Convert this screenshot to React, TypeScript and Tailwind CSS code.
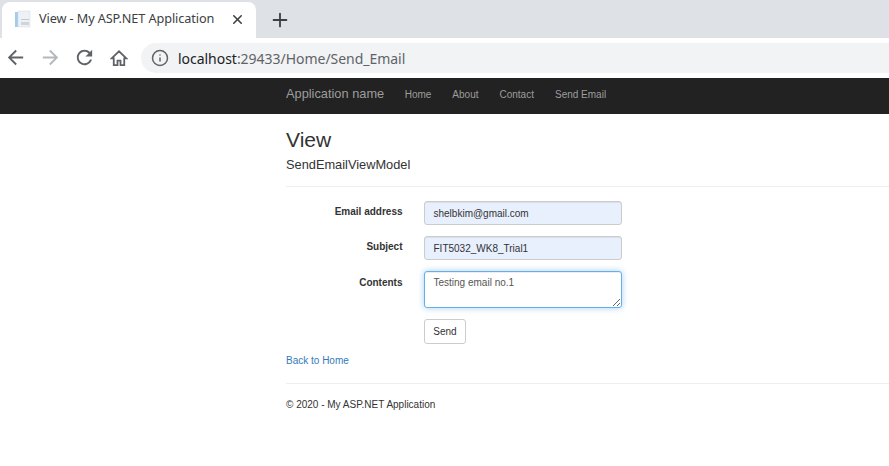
import { Info, Plus, X } from "lucide-react";

const navLinks = ["Home", "About", "Contact", "Send Email"];

function TabIcon() {
  return (
    <svg width="16" height="18" viewBox="0 0 16 18" className="shrink-0">
      <rect x="0" y="2" width="5" height="15" fill="#a5cbea" />
      <rect x="3" y="1" width="12" height="16" fill="#edf0f4" stroke="#d5dbe2" strokeWidth="0.5" />
      <rect x="6" y="9" width="8" height="1" fill="#c3cbd4" />
      <rect x="6" y="12" width="8" height="3" fill="#ced5dd" />
    </svg>
  );
}

function ToolIcon({ d, className }: { d: string; className: string }) {
  return (
    <svg width="23" height="23" viewBox="0 0 24 24" fill="currentColor" className={className}>
      <path d={d} />
    </svg>
  );
}

function Field({ label, value }: { label: string; value: string }) {
  return (
    <div className="flex items-center h-[24px] mb-[11px]">
      <label className="w-[116.5px] text-right text-[10px] font-bold text-[#333] mt-[-3px]">{label}</label>
      <div className="ml-[21.5px] w-[198px] h-[24px] flex items-center pl-[8.5px] text-[10px] text-[#333] bg-[#e8f0fe] border border-[#ccc] rounded-[3px] shadow-[inset_0_1px_1px_rgba(0,0,0,0.075)]">
        {value}
      </div>
    </div>
  );
}

export default function App() {
  return (
    <div className="w-[889px] h-[466px] overflow-hidden bg-white font-['Liberation_Sans',Arial,sans-serif]">
      {/* 브라우저 탭 */}
      <div className="h-[38px] bg-[#dee1e6] flex items-end pl-[2px]">
        <div className="w-[254px] h-[36px] bg-white rounded-t-[8px] flex items-center pl-[13px] pr-[11px] pb-[2px]">
          <TabIcon />
          <span className="ml-[8px] text-[12.7px] text-[#3c4043] font-['Noto_Sans','Open_Sans',sans-serif] tracking-[-0.1px] whitespace-nowrap">
            View - My ASP.NET Application
          </span>
          <X size={15} strokeWidth={2.5} className="ml-auto text-[#3c4043]" />
        </div>
        <Plus size={22} strokeWidth={2} className="ml-[12.5px] mb-[7px] text-[#3c4043]" />
      </div>

      {/* 주소창 */}
      <div className="h-[39px] bg-white flex items-center pl-[4px]">
        <ToolIcon
          className="text-[#5f6368]"
          d="M20 11H7.83l5.59-5.59L12 4l-8 8 8 8 1.41-1.41L7.83 13H20v-2z"
        />
        <ToolIcon
          className="ml-[11.5px] text-[#b4b7bb]"
          d="M4 11h12.17l-5.59-5.59L12 4l8 8-8 8-1.41-1.41L16.17 13H4v-2z"
        />
        <ToolIcon
          className="ml-[11.5px] text-[#5f6368]"
          d="M17.65 6.35C16.2 4.9 14.21 4 12 4c-4.42 0-7.99 3.58-7.99 8s3.57 8 7.99 8c3.73 0 6.84-2.55 7.73-6h-2.08c-.82 2.33-3.04 4-5.65 4-3.31 0-6-2.69-6-6s2.69-6 6-6c1.66 0 3.14.69 4.22 1.78L13 11h7V4l-2.35 2.35z"
        />
        <svg
          width="18"
          height="18"
          viewBox="0 0 24 24"
          fill="none"
          stroke="currentColor"
          strokeWidth="2.4"
          className="ml-[14px] text-[#5f6368]"
        >
          <path d="M10 21.5v-6h4v6h5v-9h2.8L12 3 2.2 12.5H5v9z" />
        </svg>
        <div className="ml-[13px] flex-1 h-[30px] mt-[1px] bg-[#f1f3f4] rounded-l-[15px] flex items-center pl-[10px]">
          <Info size={18} strokeWidth={2} className="text-[#5f6368]" />
          <span className="ml-[9px] text-[14px] tracking-[-0.03px] text-[#5f6368] font-['Noto_Sans','Open_Sans',sans-serif] whitespace-nowrap">
            <span className="text-[#202124]">localhost</span>:29433/Home/Send_Email
          </span>
        </div>
      </div>

      {/* 네비게이션 */}
      <nav className="h-[36px] mt-[1px] pb-[4px] bg-[#222] flex items-center pl-[286px]">
        <span className="text-[12.8px] text-[#9d9d9d] whitespace-nowrap">Application name</span>
        <div className="ml-[20.5px] flex gap-[21px]">
          {navLinks.map((link) => (
            <span key={link} className="text-[10px] text-[#9d9d9d] whitespace-nowrap">
              {link}
            </span>
          ))}
        </div>
      </nav>

      {/* 본문 */}
      <main className="pl-[286px] text-[#333]">
        <h2 className="text-[21px] leading-[24px] mt-[14px]">View</h2>
        <h4 className="text-[12.8px] leading-[14px] mt-[6px]">SendEmailViewModel</h4>
        <hr className="mt-[14px] mb-[14px] border-[#eee]" />

        <Field label="Email address" value="shelbkim@gmail.com" />
        <Field label="Subject" value="FIT5032_WK8_Trial1" />

        <div className="flex items-start mb-[11px]">
          <label className="w-[116.5px] text-right text-[10px] font-bold text-[#333] mt-[4px]">Contents</label>
          <textarea
            readOnly
            value="Testing email no.1"
            className="ml-[21.5px] w-[198px] h-[37px] px-[8.5px] py-[4px] text-[10px] leading-[14px] text-[#555] bg-white border border-[#66afe9] rounded-[3px] outline-none shadow-[inset_0_1px_1px_rgba(0,0,0,0.075),0_0_6px_rgba(102,175,233,0.6)]"
          />
        </div>

        <button className="ml-[138px] w-[42px] h-[25px] block text-[10px] text-[#333] bg-white border border-[#ccc] rounded-[3px]">
          Send
        </button>

        <a className="block mt-[10px] text-[10px] leading-[14px] text-[#337ab7]">Back to Home</a>
        <hr className="mt-[15px] border-[#eee]" />
        <p className="mt-[14px] text-[10px] leading-[14px]">© 2020 - My ASP.NET Application</p>
      </main>
    </div>
  );
}
